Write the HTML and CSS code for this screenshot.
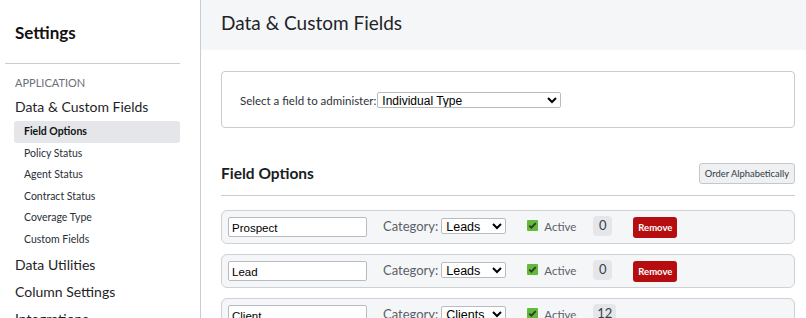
FILE: index.html
```
<!DOCTYPE html>
<html>
<head>
<meta charset="utf-8">
<link rel="stylesheet" href="styles.css">
</head>
<body>
<aside class="sidebar">
  <h2 class="side-title">Settings</h2>
  <div class="side-divider"></div>
  <div class="side-section">APPLICATION</div>
  <div class="side-item">Data &amp; Custom Fields</div>
  <ul class="side-sub">
    <li class="active">Field Options</li>
    <li>Policy Status</li>
    <li>Agent Status</li>
    <li>Contract Status</li>
    <li>Coverage Type</li>
    <li>Custom Fields</li>
  </ul>
  <div class="side-item">Data Utilities</div>
  <div class="side-item">Column Settings</div>
  <div class="side-item">Integrations</div>
</aside>
<main class="content">
  <header class="page-header">
    <h1>Data &amp; Custom Fields</h1>
  </header>
  <div class="body">
    <div class="card">
      <label class="field-label">Select a field to administer:</label>
      <select class="field-select"><option>Individual Type</option></select>
    </div>
    <div class="section-head">
      <h3>Field Options</h3>
      <button class="btn-order">Order Alphabetically</button>
    </div>
    <div class="rows">
      <div class="row">
        <input class="name" type="text" value="Prospect">
        <span class="cat-label">Category:</span>
        <select class="cat"><option>Leads</option></select>
        <span class="check"><svg viewBox="0 0 11 11" width="11" height="11"><path d="M2.3 5.6 L4.4 7.7 L8.7 3.2" fill="none" stroke="#2f3a2a" stroke-width="1.8"/></svg></span>
        <span class="active-label">Active</span>
        <span class="count">0</span>
        <button class="btn-remove">Remove</button>
      </div>
      <div class="row">
        <input class="name" type="text" value="Lead">
        <span class="cat-label">Category:</span>
        <select class="cat"><option>Leads</option></select>
        <span class="check"><svg viewBox="0 0 11 11" width="11" height="11"><path d="M2.3 5.6 L4.4 7.7 L8.7 3.2" fill="none" stroke="#2f3a2a" stroke-width="1.8"/></svg></span>
        <span class="active-label">Active</span>
        <span class="count">0</span>
        <button class="btn-remove">Remove</button>
      </div>
      <div class="row">
        <input class="name" type="text" value="Client">
        <span class="cat-label">Category:</span>
        <select class="cat"><option>Clients</option></select>
        <span class="check"><svg viewBox="0 0 11 11" width="11" height="11"><path d="M2.3 5.6 L4.4 7.7 L8.7 3.2" fill="none" stroke="#2f3a2a" stroke-width="1.8"/></svg></span>
        <span class="active-label">Active</span>
        <span class="count">12</span>
      </div>
    </div>
  </div>
</main>
</body>
</html>
```
FILE: styles.css
```
* { box-sizing: border-box; }
html, body { margin: 0; padding: 0; height: 100%; overflow: hidden; }
body {
  display: flex;
  font-family: "Lato", "Open Sans", sans-serif;
  color: #1f2328;
  background: #fff;
}
.sidebar {
  width: 201px;
  flex: none;
  border-right: 1px solid #c9cdd3;
  padding: 21px 20px 0 5px;
}
.side-title {
  margin: 0;
  padding-left: 10px;
  font-size: 17px;
  font-weight: 700;
  line-height: 24px;
  color: #111;
}
.side-divider {
  margin-top: 18px;
  height: 1px;
  background: #c9cdd3;
}
.side-section {
  margin-top: 9px;
  padding-left: 10px;
  font-size: 11px;
  line-height: 20px;
  color: #6b7078;
}
.side-item {
  padding-left: 10px;
  font-size: 14px;
  line-height: 27px;
  color: #1f2328;
}
.side-sub {
  list-style: none;
  margin: 0 0 1px;
  padding: 1px 0 0 9px;
}
.side-sub li {
  padding-left: 10px;
  font-size: 10.5px;
  line-height: 21.5px;
  height: 21.5px;
  color: #2a2f36;
  border-radius: 3px;
}
.side-sub li.active {
  background: #e4e6e9;
  font-weight: 700;
  color: #111;
}
.content {
  flex: 1;
  min-width: 0;
}
.page-header {
  height: 50px;
  background: #f5f6f8;
  padding: 11px 20px 0 20px;
}
.page-header h1 {
  margin: 0;
  font-size: 19px;
  font-weight: 400;
  line-height: 24px;
  color: #1f2328;
}
.body {
  padding: 21px 11px 0 20px;
}
.card {
  height: 57px;
  border: 1px solid #c9cdd3;
  border-radius: 4px;
  padding: 0 18px;
  display: flex;
  align-items: center;
  padding-top: 1px;
}
.field-label {
  font-size: 11.5px;
  color: #2e333a;
  margin-right: 1px;
}
.field-select {
  width: 184px;
  height: 16px;
  font-family: "Liberation Sans", Arial, sans-serif;
  font-size: 12px;
  padding: 0;
  border: 1px solid #b8bcc2;
  border-radius: 2px;
  background: #fff;
  color: #000;
}
.section-head {
  margin-top: 34px;
  display: flex;
  justify-content: space-between;
  align-items: center;
  border-bottom: 1px solid #c9cdd3;
  padding-bottom: 11px;
}
.section-head h3 {
  margin: 0;
  font-size: 15.5px;
  font-weight: 700;
  line-height: 22px;
  color: #1a1d21;
}
.btn-order {
  height: 21px;
  padding: 0 5px;
  font-family: inherit;
  font-size: 9.4px;
  color: #333a42;
  background: #eef0f2;
  border: 1px solid #c4c8ce;
  border-radius: 3px;
}
.rows {
  margin-top: 14px;
  display: flex;
  flex-direction: column;
  gap: 10px;
}
.row {
  height: 34px;
  border: 1px solid #cdd1d6;
  border-radius: 6px;
  background: #f5f6f8;
  display: flex;
  align-items: center;
  padding-left: 6px;
}
.name {
  width: 139px;
  height: 20px;
  font-family: "Liberation Sans", Arial, sans-serif;
  font-size: 11.5px;
  padding: 2px 3px 0;
  border: 1px solid #b8bcc2;
  border-radius: 2px;
  color: #000;
  background: #fff;
}
.cat-label {
  margin-left: 16px;
  font-size: 13px;
  color: #5a6068;
  margin-top: -3px;
}
.cat {
  margin-left: 3px;
  width: 65px;
  height: 16px;
  font-family: "Liberation Sans", Arial, sans-serif;
  font-size: 12.5px;
  padding: 0;
  border: 1px solid #b8bcc2;
  border-radius: 2px;
  background: #fff;
  color: #000;
  margin-top: -3px;
}
.check {
  margin-left: 21px;
  width: 11px;
  height: 11px;
  background: #62b93a;
  border-radius: 1px;
  display: inline-flex;
  margin-top: -3px;
}
.active-label {
  margin-left: 6px;
  font-size: 11.5px;
  color: #5a6068;
  margin-top: -1px;
}
.count {
  margin-left: 17px;
  min-width: 19px;
  height: 20px;
  padding: 0 4px;
  background: #e4e6e9;
  border-radius: 4px;
  font-size: 13px;
  line-height: 19px;
  text-align: center;
  color: #3a3f46;
  margin-top: -2px;
}
.btn-remove {
  margin-left: 21px;
  width: 44px;
  height: 21px;
  padding: 0;
  font-family: inherit;
  font-size: 9.5px;
  font-weight: 700;
  color: #fff;
  background: #b50d10;
  border: none;
  border-radius: 3px;
}
```
